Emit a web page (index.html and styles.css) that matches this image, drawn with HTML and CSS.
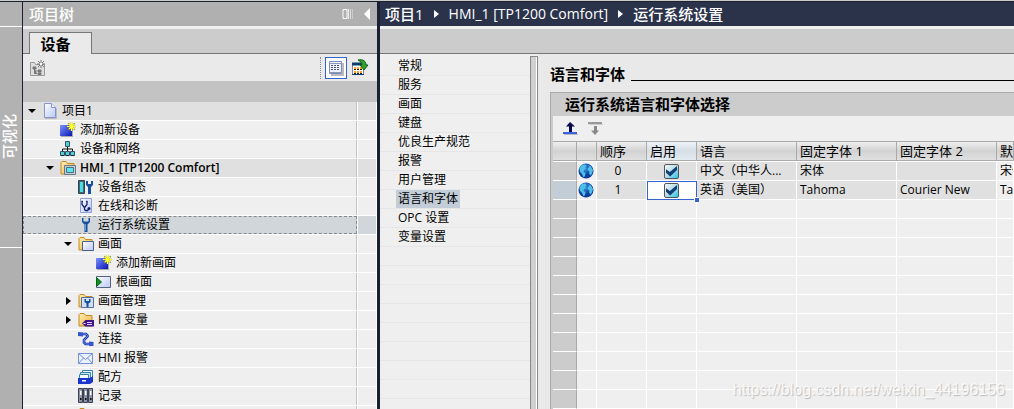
FILE: index.html
```html
<!DOCTYPE html>
<html lang="zh-CN">
	<head>
		<meta charset="UTF-8">
		<title>运行系统设置</title>
		<link rel="stylesheet" href="styles.css">
	</head>
	<body>
		<!--图标-->
		<svg class="sprite" aria-hidden="true">
			<defs>
				<linearGradient id="gBlue" x2="1" y2="1"><stop offset="0" stop-color="#7d94ff"/><stop offset="1" stop-color="#0a14b4"/></linearGradient>
				<linearGradient id="gPage" x2="1" y2="1"><stop offset="0" stop-color="#fff"/><stop offset="1" stop-color="#b9c8f5"/></linearGradient>
				<linearGradient id="gFolder" x2="1" y2="1"><stop offset="0" stop-color="#fff0b0"/><stop offset="1" stop-color="#eeb044"/></linearGradient>
				<radialGradient id="gGlobe" cx="0.4" cy="0.3"><stop offset="0" stop-color="#3f9bea"/><stop offset="1" stop-color="#0c3c9c"/></radialGradient>
				<symbol id="star" viewBox="0 0 16 16">
					<path d="M11.500 0v9M7 4.500h9M8.300 1.300l6.400 6.400M14.700 1.300l-6.400 6.400" stroke="#8a9a2c" stroke-width="1.400"/>
					<path d="M11.500 0v9M7 4.500h9M9 2l5 5M14 2l-5 5" stroke="#ffff32" stroke-width="1.200"/>
				</symbol>
				<symbol id="folder" viewBox="0 0 16 16">
					<path d="M1 14V2.500L2 1.500h4l1.500 2H14V14z" fill="url(#gFolder)" stroke="#c48a26"/>
				</symbol>
				<symbol id="wrench" viewBox="0 0 16 16">
					<path d="M4 1v4l2.500 2.500V15h3V7.500L12 5V1h-1.500v3.500h-5V1z" fill="#174f9c"/>
					<path d="M7.500 7v7" stroke="#5d9ce0"/>
				</symbol>
				<symbol id="page" viewBox="0 0 16 16">
					<path d="M3 2h9l3 4v10H3z" fill="#bbb"/>
					<path d="M2.500.500h7l4 4v10h-11z" fill="url(#gPage)" stroke="#8793cf"/>
					<path d="M9.500.500v4h4" fill="#fff" stroke="#8793cf"/>
				</symbol>
				<symbol id="add" viewBox="0 0 16 16">
					<path d="M1 4h12v11H1z" fill="#aaa"/>
					<path d="M0 3h12v11H0z" fill="url(#gBlue)"/>
					<use href="#star"/>
				</symbol>
				<symbol id="network" viewBox="0 0 16 16">
					<path d="M7.500 5v3M2.500 11V8h10v3M7.500 8v3" fill="none" stroke="#111"/>
					<path d="M5.500.500h4v5h-4zM.500 10.500h4v4h-4zM5.500 10.500h4v4h-4zM10.500 10.500h4v4h-4z" fill="#50cfd0" stroke="#33516b"/>
					<path d="M6 14.500h3M1 14.500h3M11 14.500h3" stroke="#223"/>
				</symbol>
				<symbol id="hmi" viewBox="0 0 16 16">
					<use href="#folder"/>
					<path d="M4.500 5.500h11v9h-11z" fill="#c8d0d6" stroke="#68788a"/>
					<path d="M6.500 7.500h7v5h-7z" fill="#5ae6ea" stroke="#4b7080"/>
				</symbol>
				<symbol id="config" viewBox="0 0 16 16">
					<path d="M.500 1.500h6v13h-6z" fill="#4b6673" stroke="#2d4653"/>
					<path d="M2 3h3v10H2z" fill="#45e0e4"/>
					<path d="M8 2v4l2 2v7h3V8l2-2V2h-2v3h-3V2z" fill="#174f9c"/>
				</symbol>
				<symbol id="diagnose" viewBox="0 0 16 16">
					<path d="M2.500.500h11v14h-11z" fill="url(#gPage)" stroke="#8fa0d8"/>
					<path d="M5 3.500h-1v3l2 2.500h1l2-2.500v-3H8M6.500 9v2.500l1 1h2l1.500-1.500" fill="none" stroke="#14206c" stroke-width="1.300"/>
					<circle cx="11" cy="10.500" r="1.500" fill="#14206c"/>
				</symbol>
				<symbol id="screens" viewBox="0 0 16 16">
					<use href="#folder"/>
					<path d="M4.500 5.500h11v9h-11z" fill="url(#gPage)" stroke="#48608c"/>
				</symbol>
				<symbol id="root" viewBox="0 0 16 16">
					<path d="M.500 2.500h14v11H.500z" fill="url(#gPage)" stroke="#55647e"/>
					<path d="M.500 3.500l5 4.500-5 4.500z" fill="#109020" stroke="#066012"/>
				</symbol>
				<symbol id="manage" viewBox="0 0 16 16">
					<use href="#folder"/>
					<path d="M3.500 4.500h12v10h-12z" fill="#cfe0f4" stroke="#566f9c"/>
					<path d="M6.500 6v3l2 1.500V14h2v-3.500l2-1.500V6h-1.500v2h-3V6z" fill="#174f9c"/>
				</symbol>
				<symbol id="tags" viewBox="0 0 16 16">
					<use href="#folder"/>
					<path d="M4 11.500L7.500 8H16v6.500H7.500z" fill="#43158a"/>
					<path d="M9 10.500h5M9 12.500h5" stroke="#e1d0ff"/>
					<path d="M5.500 11.500h2" stroke="#fff"/>
				</symbol>
				<symbol id="link" viewBox="0 0 16 16">
					<path d="M3 3h5l1.500 1.500v1L6 9v2.500L7.500 13H13" fill="none" stroke="#1d3aa8" stroke-width="2.600"/>
					<path d="M3 3h5l1.500 1.500v1L6 9v2.500L7.500 13H13" fill="none" stroke="#6f90f4"/>
					<path d="M0 1l5 .500v4L0 5zM11 10.500l4.500.500v4H11z" fill="#3554cf"/>
				</symbol>
				<symbol id="mail" viewBox="0 0 16 16">
					<path d="M.500 3.500h14v10H.500z" fill="#eaf1ff" stroke="#7590dc"/>
					<path d="M.500 3.500l7 6 7-6M.500 13.500l5-5.500M14.500 13.500l-5-5.500" fill="none" stroke="#7590dc"/>
				</symbol>
				<symbol id="recipe" viewBox="0 0 16 16">
					<path d="M4.500 1.500h10v8h-10z" fill="#e2f3fa" stroke="#3d84a8"/>
					<path d="M2.500 3.500h10v8h-10z" fill="#c5e8f5" stroke="#3d84a8"/>
					<path d="M1.500 5.500h9v5h-9z" fill="#f4fbff" stroke="#3d84a8"/>
					<path d="M0 9h12l3-2v6l-3 2H0z" fill="#1b36cc"/>
					<path d="M4 11h4v1.500H4z" fill="#fff"/>
				</symbol>
				<symbol id="log" viewBox="0 0 16 16">
					<path d="M.500.500h4v14h-4zM5.500.500h4v14h-4zM10.500.500h4v14h-4z" fill="#8b93a4" stroke="#3a4152"/>
					<path d="M2 3h1.500v4H2zM7 3h1.500v4H7zM12 3h1.500v4H12z" fill="#fff"/>
					<path d="M2 10h1.500v2H2zM7 10h1.500v2H7zM12 10h1.500v2H12z" fill="#111"/>
				</symbol>
				<symbol id="globe" viewBox="0 0 16 16">
					<circle cx="8" cy="8" r="7.500" fill="url(#gGlobe)"/>
					<path d="M1.500 5L4 2l3-.500L8.500 3 7 4.500l1 1.500-2 1-.500 2 2 1L7 13l-1.500 1.500L4 11 2 8.500zM10 2l3 1.500L15 7l-1 3.500-1.500 2-1.500-2 .500-2L9.500 7 10 5l1.500-1z" fill="#4dbfe6"/>
				</symbol>
			</defs>
		</svg>

		<aside class="portal">
			<div class="portal-top"></div>
			<button class="portal-tab"><span>可视化</span></button>
			<div class="portal-rest"></div>
		</aside>

		<section class="project">
			<header class="bar">
				<h2>项目树</h2>
				<button class="bar-btn" aria-label="自动折叠">
					<svg width="12" height="12"><path d="M1 1.500h4v9H1z" fill="none" stroke="#fff"/><path d="M6.500 1v10" stroke="#f0f0f0"/><path d="M8.500 1v10" stroke="#ddd"/><path d="M10.500 1v10" stroke="#ccc"/></svg>
				</button>
				<button class="bar-btn" aria-label="折叠">
					<svg width="8" height="12"><path d="M7 0v12L1 6z" fill="#fff"/></svg>
				</button>
			</header>
			<div class="tabs"><button class="tab">设备</button></div>
			<div class="tools">
				<button aria-label="新建组">
					<svg width="18" height="18"><path d="M1.500 16.500v-13h4l1 2h9v11z" fill="#ddd" stroke="#999"/><path d="M4 8h3v2H4zM5.500 10v4.500H8M5.500 12H8M9 11h3v2H9zM9 14h3v1.500H9z" fill="#777" stroke="#777"/><path d="M12 1v8M8 5h8M9 2l6 6M15 2L9 8" stroke="#777"/><path d="M12 4v2" stroke="#fff" stroke-width="2"/></svg>
				</button>
				<i class="dots"></i>
				<button class="on" aria-label="列表视图">
					<svg width="16" height="16"><path d="M3 3h13v13H3z" fill="#bbb"/><path d="M1.500 1.500h12v12h-12z" fill="#eef2ff" stroke="#7f8bc0"/><path d="M1 3.500h13M1 12.500h13" stroke="#8b99b5"/><path d="M3 5.500h9M3 7.500h9M3 9.500h9" stroke="#4a5578" stroke-dasharray="2 1"/></svg>
				</button>
				<button aria-label="打开总览">
					<svg width="18" height="18"><path d="M1.500 4.500h11v11h-11z" fill="#fff" stroke="#789"/><path d="M1 5h12" stroke="#0c3c70" stroke-width="3"/><path d="M1 15.500h12" stroke="#0c3c70"/><path d="M3 9h9M3 13h9" stroke="#ff9d28" stroke-width="2" stroke-dasharray="2 1"/><path d="M3 10.500h9M3 14.500h9" stroke="#222" stroke-dasharray="2 1"/><path d="M7 1c5-1 8 1 8 5h2l-4 5-4-5h2c0-2-1-3-4-5z" fill="#2da32e" stroke="#126018"/></svg>
				</button>
			</div>
			<div class="spacer"></div>
			<ul class="tree">
				<li class="dark"><div class="level0"><button class="open" aria-label="折叠"></button><svg><use href="#page"/></svg><a href="#">项目1</a></div></li>
				<li><div class="level1"><i></i><svg><use href="#add"/></svg><a href="#">添加新设备</a></div></li>
				<li><div class="level1"><i></i><svg><use href="#network"/></svg><a href="#">设备和网络</a></div></li>
				<li class="dark"><div class="level1"><button class="open" aria-label="折叠"></button><svg><use href="#hmi"/></svg><a class="device" href="#">HMI_1 [TP1200 Comfort]</a></div></li>
				<li><div class="level2"><i></i><svg><use href="#config"/></svg><a href="#">设备组态</a></div></li>
				<li><div class="level2"><i></i><svg><use href="#diagnose"/></svg><a href="#">在线和诊断</a></div></li>
				<li class="selected"><div class="level2"><i></i><svg><use href="#wrench"/></svg><a href="#">运行系统设置</a></div></li>
				<li><div class="level2"><button class="open" aria-label="折叠"></button><svg><use href="#screens"/></svg><a href="#">画面</a></div></li>
				<li><div class="level3"><i></i><svg><use href="#add"/></svg><a href="#">添加新画面</a></div></li>
				<li><div class="level3"><i></i><svg><use href="#root"/></svg><a href="#">根画面</a></div></li>
				<li><div class="level2"><button class="closed" aria-label="展开"></button><svg><use href="#manage"/></svg><a href="#">画面管理</a></div></li>
				<li><div class="level2"><button class="closed" aria-label="展开"></button><svg><use href="#tags"/></svg><a href="#">HMI 变量</a></div></li>
				<li><div class="level2"><i></i><svg><use href="#link"/></svg><a href="#">连接</a></div></li>
				<li><div class="level2"><i></i><svg><use href="#mail"/></svg><a href="#">HMI 报警</a></div></li>
				<li><div class="level2"><i></i><svg><use href="#recipe"/></svg><a href="#">配方</a></div></li>
				<li><div class="level2"><i></i><svg><use href="#log"/></svg><a href="#">记录</a></div></li>
				<li><div class="level2"><i></i><svg><use href="#folder"/></svg></div></li>
			</ul>
		</section>

		<main class="work">
			<nav class="bar crumbs">
				<a href="#">项目1</a><i></i><a class="device" href="#">HMI_1 [TP1200 Comfort]</a><i></i><a href="#">运行系统设置</a>
			</nav>
			<div class="tabs"></div>
			<div class="editor">
				<nav class="menu">
					<a href="#"><span>常规</span></a>
					<a href="#"><span>服务</span></a>
					<a href="#"><span>画面</span></a>
					<a href="#"><span>键盘</span></a>
					<a href="#"><span>优良生产规范</span></a>
					<a href="#"><span>报警</span></a>
					<a href="#"><span>用户管理</span></a>
					<a href="#" class="active"><span>语言和字体</span></a>
					<a href="#"><span>OPC 设置</span></a>
					<a href="#"><span>变量设置</span></a>
				</nav>
				<div class="splitter"></div>
				<div class="content">
					<h1>语言和字体</h1>
					<section class="panel">
						<h2>运行系统语言和字体选择</h2>
						<div class="panel-tools">
							<button aria-label="上移"><svg width="16" height="16"><path d="M7 1L3 5.500h3V11h3V5.500h3z" fill="#08084c"/><path d="M1 13.500h14" stroke="#b5b5c5"/><path d="M0 12h14" stroke="#3c62e0" stroke-width="2"/></svg></button>
							<button aria-label="下移" disabled><svg width="16" height="16"><path d="M2 3.500h14" stroke="#ccc"/><path d="M1 2h14" stroke="#999" stroke-width="2"/><path d="M8 14l-4-4.500h3V5h3v4.500h2z" fill="#888"/></svg></button>
						</div>
						<table>
							<colgroup>
								<col class="c-head"><col class="c-icon"><col class="c-small"><col class="c-small"><col class="c-text"><col class="c-text"><col class="c-text"><col>
							</colgroup>
							<thead>
								<tr>
									<th></th><th></th><th>顺序</th><th class="hot" id="enable">启用</th><th>语言</th><th>固定字体 1</th><th>固定字体 2</th><th>默认字体</th>
								</tr>
							</thead>
							<tbody>
								<tr class="data">
									<td></td><td><svg><use href="#globe"/></svg></td><td class="num">0</td><td class="check"><input type="checkbox" checked aria-labelledby="enable"></td><td>中文（中华人...</td><td>宋体</td><td></td><td>宋体</td>
								</tr>
								<tr class="data current">
									<td></td><td><svg><use href="#globe"/></svg></td><td class="num">1</td><td class="check focus"><input type="checkbox" checked aria-labelledby="enable"></td><td>英语（美国）</td><td>Tahoma</td><td>Courier New</td><td>Tahoma</td>
								</tr>
								<tr><td></td><td></td><td></td><td></td><td></td><td></td><td></td><td></td></tr>
								<tr><td></td><td></td><td></td><td></td><td></td><td></td><td></td><td></td></tr>
								<tr><td></td><td></td><td></td><td></td><td></td><td></td><td></td><td></td></tr>
								<tr><td></td><td></td><td></td><td></td><td></td><td></td><td></td><td></td></tr>
								<tr><td></td><td></td><td></td><td></td><td></td><td></td><td></td><td></td></tr>
								<tr><td></td><td></td><td></td><td></td><td></td><td></td><td></td><td></td></tr>
								<tr><td></td><td></td><td></td><td></td><td></td><td></td><td></td><td></td></tr>
								<tr><td></td><td></td><td></td><td></td><td></td><td></td><td></td><td></td></tr>
								<tr><td></td><td></td><td></td><td></td><td></td><td></td><td></td><td></td></tr>
								<tr><td></td><td></td><td></td><td></td><td></td><td></td><td></td><td></td></tr>
								<tr><td></td><td></td><td></td><td></td><td></td><td></td><td></td><td></td></tr>
							</tbody>
						</table>
					</section>
				</div>
			</div>
		</main>
		<div class="watermark">https://blog.csdn.net/weixin_44196156</div>
	</body>
</html>
```
FILE: styles.css
```css
*,*::before,*::after{
	box-sizing: border-box;
}
body{
	margin: 0;
	height: 100vh;
	display: flex;
	overflow: hidden;
	border-top: 1px solid #c8cbc8;
	background: #efefef;
	font: 12px/18px "Open Sans","Noto Sans CJK SC",sans-serif;
	color: #000;
}
h1,h2,ul{
	margin: 0;
	padding: 0;
}
a{
	color: inherit;
	text-decoration: none;
}
button{
	margin: 0;
	padding: 0;
	border: 0;
	background: none;
	font: inherit;
	color: inherit;
}
svg{
	display: block;
	flex: none;
}
.sprite{
	position: absolute;
	width: 0;
	height: 0;
}

/*左侧竖条*/
.portal{
	width: 23px;
	flex: none;
	display: flex;
	flex-direction: column;
	border-top: 1px solid #1c2030;
	border-right: 1px solid #1c2030;
	background: #b2b2b2;
}
.portal-top{
	height: 25px;
	border-bottom: 1px solid #fff;
}
.portal-tab{
	height: 221px;
	border-bottom: 1px solid #fff;
	display: flex;
	align-items: center;
	font-size: 15px;
	font-weight: 500;
	line-height: 18px;
	color: #fff;
}
.portal-tab span{
	writing-mode: vertical-rl;
	text-orientation: sideways;
	transform: rotate(180deg);
}
.portal-rest{
	flex: 1;
	background: #b0b0b0;
}

/*公用标题栏*/
.bar{
	height: 28px;
	display: flex;
	align-items: center;
	padding: 0 6px;
	border-top: 1px solid #1c2030;
	border-bottom: 3px solid #f0f0f0;
	background: #b0b0b0;
	color: #fff;
	font-size: 15px;
	font-weight: 500;
}
.bar h2{
	flex: 1;
	font-size: 15px;
	font-weight: 500;
}
.bar-btn{
	margin-left: 9px;
}
.tabs{
	height: 25px;
	flex: none;
	padding: 3px 6px 0;
	border-bottom: 1px solid #777;
	background: #ccc;
}
.tab{
	display: block;
	width: 63px;
	height: 22px;
	padding-right: 10px;
	border: 1px solid #777;
	border-bottom: 0;
	background: #eaeaea;
	font-size: 15px;
	font-weight: bold;
	line-height: 20px;
}

/*项目树*/
.project{
	width: 357px;
	flex: none;
	border-right: 3px solid #1a2033;
	background: #efefef;
}
.tools{
	height: 27px;
	display: flex;
	align-items: center;
	padding: 0 8px 0 6px;
	background: #eaeaea;
}
.tools .dots{
	height: 22px;
	margin: 0 4px 0 auto;
	border-left: 1px dotted #888;
}
.tools .on{
	padding: 2px;
	margin-right: 4px;
	border: 1px solid #3465cf;
	background: #fff;
}
.spacer{
	height: 21px;
	background: #c3c3c3;
}
.tree{
	list-style: none;
}
.tree li{
	height: 19px;
	display: flex;
	border-bottom: 1px solid #fff;
}
.tree li::after{
	content: "";
	width: 20px;
	border-left: 1px solid #fff;
	border-right: 1px solid #fff;
}
.tree div{
	flex: 1;
	display: flex;
	align-items: center;
	border-right: 1px solid #c3c3c3;
}
.tree .level0{
	padding-left: 4px;
}
.tree .level1{
	padding-left: 22px;
}
.tree .level2{
	padding-left: 40px;
}
.tree .level3{
	padding-left: 58px;
}
.tree i,.tree button{
	width: 15px;
	height: 18px;
}
.tree svg{
	width: 16px;
	height: 16px;
	margin-right: 4px;
}
.tree .open::before{
	content: "";
	display: block;
	width: 8px;
	margin-left: 1px;
	border: 4px solid transparent;
	border-top-color: #000;
	border-bottom: 0;
}
.tree .closed::before{
	content: "";
	display: block;
	width: 5px;
	margin-left: 3px;
	border: 4px solid transparent;
	border-left: 5px solid #000;
	border-right: 0;
}
.tree .dark{
	background: #e0e0e0;
}
.tree .device{
	font-weight: 600;
}
.tree .selected{
	background: #d1d6da;
}
.tree .selected div{
	outline: 1px dashed #888;
	outline-offset: -1px;
}

/*工作区*/
.work{
	flex: 1;
	min-width: 0;
	display: flex;
	flex-direction: column;
}
.crumbs{
	flex: none;
	padding: 0 5px;
	background: #2b334b;
	white-space: nowrap;
}
.crumbs .device{
	font-size: 14px;
}
.crumbs i{
	margin: 0 10px;
	border: 4px solid transparent;
	border-left: 5px solid #fff;
	border-right: 0;
}
.editor{
	flex: 1;
	min-height: 0;
	display: flex;
}
.menu{
	width: 150px;
	flex: none;
	padding: 3px 1px 0;
	background: repeating-linear-gradient(#efefef 0 18px,#e6e6e6 18px 19px) 0 3px;
}
.menu a{
	display: block;
	height: 19px;
	padding-left: 15px;
}
.menu span{
	display: inline-block;
	padding: 0 2px;
}
.menu .active span{
	background: #c3cdd7;
}
.splitter{
	width: 8px;
	flex: none;
	margin-top: 2px;
	border: 1px solid #888;
	border-bottom: 0;
	background: #d0d0d0;
	box-shadow: inset -1px 0 #fff;
}
.content{
	flex: 1;
	min-width: 0;
	padding: 9px 0 0 12px;
	background: #e9e9e9;
}
.content h1{
	display: flex;
	font-size: 15px;
	line-height: 22px;
}
.content h1::after{
	content: "";
	flex: 1;
	height: 1px;
	margin: 17px 0 0 6px;
	background: #000;
}
.panel{
	margin-top: 7px;
	padding-left: 2px;
	border-top: 1px solid #aaa;
	border-left: 1px solid #aaa;
	background: #ccc;
}
.panel h2{
	padding-left: 12px;
	font-size: 15px;
	line-height: 23px;
}
.panel-tools{
	height: 26px;
	display: flex;
	align-items: center;
	gap: 8px;
	padding-left: 10px;
	border-bottom: 1px solid #aaa;
	background: #efefef;
}
table{
	width: 100%;
	table-layout: fixed;
	border-collapse: separate;
	border-spacing: 0;
	background: #efefef;
}
.c-head{
	width: 24px;
}
.c-icon{
	width: 20px;
}
.c-small{
	width: 50px;
}
.c-text{
	width: 100px;
}
th{
	height: 19px;
	padding: 0 0 0 3px;
	border-right: 1px solid #aaa;
	border-bottom: 1px solid #aaa;
	background: linear-gradient(#efefef,#d2d2d2 50%,#e0e0e0);
	font-size: 13px;
	font-weight: normal;
	line-height: 17px;
	text-align: left;
	white-space: nowrap;
	overflow: hidden;
}
th.hot{
	background: linear-gradient(#eef3f8,#d5dde6 50%,#e4ebf2);
}
td{
	height: 19px;
	padding: 0 0 0 3px;
	border-right: 1px solid #fff;
	border-bottom: 1px solid #fff;
	line-height: 18px;
	white-space: nowrap;
	overflow: hidden;
}
tbody tr:first-child td{
	height: 20px;
	border-top: 1px solid #fff;
}
td:first-child{
	border-right-color: #aaa;
	background: #ccc;
}
.data td:not(:first-child){
	background: #e0e0e0;
}
.data td:last-child,.data td:nth-child(2){
	background: #efefef;
}
.current td:first-child{
	background: #c3cdd7;
}
td svg{
	width: 16px;
	height: 16px;
	margin-left: -2px;
}
.num{
	padding: 0 7px 0 0;
	text-align: center;
}
td.check{
	padding: 0;
	text-align: center;
}
.check input{
	display: block;
	appearance: none;
	width: 15px;
	height: 15px;
	margin: 0 auto;
	border: 1px solid #555;
	border-radius: 2px;
	background: linear-gradient(135deg,#f4f9fa,#b8dce6 50%,#22c6ec);
}
.check input:checked::before{
	content: "";
	display: block;
	width: 11px;
	height: 11px;
	margin: 1px;
	background: #123f74;
	clip-path: polygon(0 35%,35% 60%,100% 5%,100% 40%,38% 100%,0 65%);
}
.data td.focus{
	position: relative;
	overflow: visible;
	background: #fff;
	outline: 1px solid #3465cf;
	outline-offset: -1px;
}
.focus::after{
	content: "";
	position: absolute;
	right: -3px;
	bottom: -3px;
	width: 5px;
	height: 5px;
	border: 1px solid #fff;
	border-right: 0;
	border-bottom: 0;
	background: #3465cf;
}

/*水印*/
.watermark{
	position: absolute;
	right: 9px;
	bottom: 9px;
	font: 16px/20px "Liberation Sans",sans-serif;
	color: #f8f8f8;
	text-shadow: 1px 1px 1px #bbb;
}
```
